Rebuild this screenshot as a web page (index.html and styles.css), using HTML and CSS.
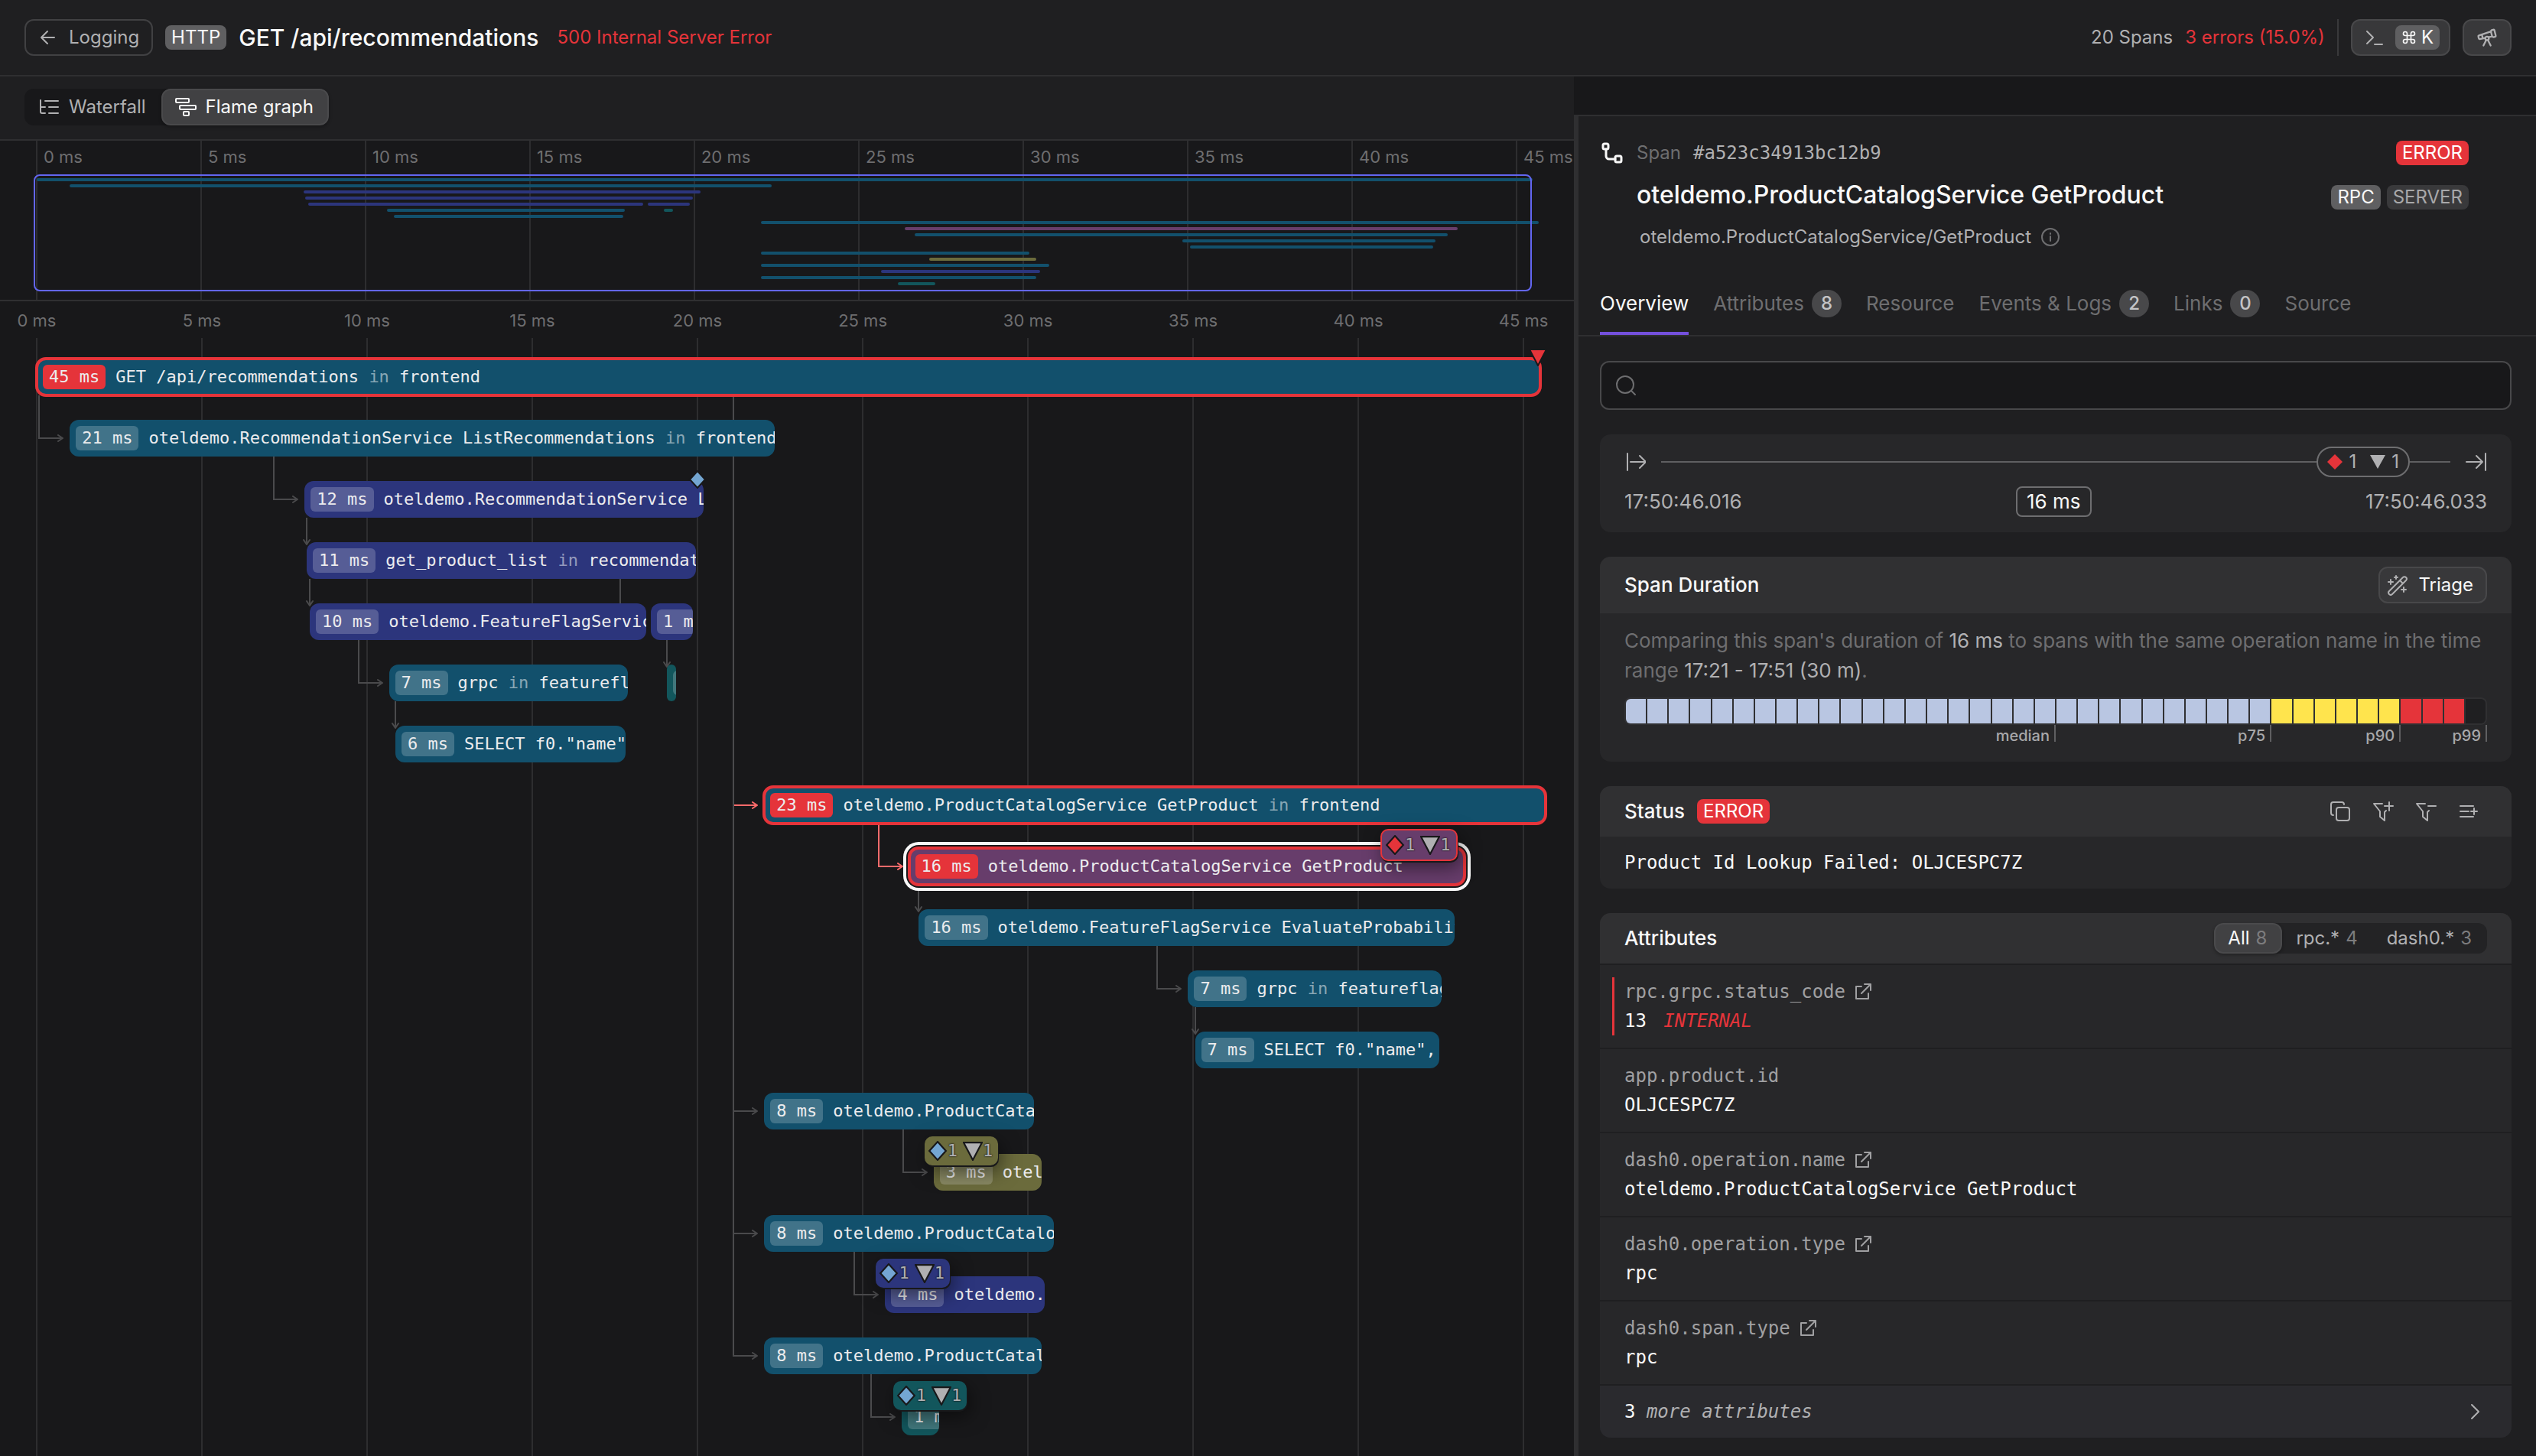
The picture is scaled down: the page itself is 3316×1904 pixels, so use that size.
FILE: index.html
```html
<!DOCTYPE html>
<html lang="en">
<head>
    <meta charset="UTF-8">
    <meta name="viewport" content="width=device-width, initial-scale=1.0">
    <title>GET /api/recommendations</title>
    <link rel="stylesheet" href="styles.css">
</head>

<body>
    <header class="topbar">
        <a class="btn btn-outline" href="#">
            <svg class="icon" width="24" height="24" viewBox="0 0 24 24"><path d="M21 12H4M12 4l-8 8 8 8"/></svg>
            Logging
        </a>
        <span class="badge badge-strong">HTTP</span>
        <h1>GET /api/recommendations</h1>
        <span class="error-text">500 Internal Server Error</span>
        <div class="topbar-right">
            <span>20 Spans</span>
            <span class="error-text">3 errors (15.0%)</span>
            <span class="divider"></span>
            <button class="btn" type="button" aria-label="Command menu">
                <svg class="icon" width="24" height="24" viewBox="0 0 24 24"><path d="M3 4l8 8-8 8M13 21h10"/></svg>
                <kbd class="badge badge-strong">
                    <svg class="icon" width="20" height="20" viewBox="0 0 24 24"><path d="M15 6v12a3 3 0 1 0 3-3H6a3 3 0 1 0 3 3V6a3 3 0 1 0-3 3h12a3 3 0 1 0-3-3"/></svg>
                    K
                </kbd>
            </button>
            <button class="btn btn-square" type="button" aria-label="Explore">
                <svg class="icon" width="28" height="28" viewBox="0 0 24 24"><path d="m10.065 12.493-6.18 1.318a.934.934 0 0 1-1.108-.702l-.537-2.15a1.07 1.07 0 0 1 .691-1.265l13.504-4.44M13.56 11.747l4.332-.924M16 21l-3.105-6.21M16.485 5.94a2 2 0 0 1 1.455-2.425l1.09-.272a1 1 0 0 1 1.212.727l1.515 6.06a1 1 0 0 1-.727 1.213l-1.09.272a2 2 0 0 1-2.425-1.455zM6.158 8.633l1.114 4.456M8 21l3.105-6.21"/><circle cx="12" cy="13" r="2"/></svg>
            </button>
        </div>
    </header>

    <main class="layout">
        <section class="trace">
            <div class="toolbar">
                <div class="segmented">
                    <button type="button">
                        <svg class="icon" width="28" height="24" viewBox="0 0 28 24"><path d="M3 3v15a2 2 0 0 0 2 2h4M3 12h6M9 4h17M14 12h12M14 20h12"/></svg>
                        Waterfall
                    </button>
                    <button class="active" type="button">
                        <svg class="icon" width="28" height="24" viewBox="0 0 28 24"><rect x="1" y="1" width="17" height="5" rx="1"/><rect x="6" y="10" width="21" height="5" rx="1"/><rect x="11" y="18" width="7" height="5" rx="1"/></svg>
                        Flame graph
                    </button>
                </div>
            </div>
            <div class="minimap">
                <div class="track" id="minimap"></div>
            </div>
            <div class="flame">
                <div class="track" id="flame"></div>
            </div>
        </section>

        <aside class="panel">
            <div class="panel-head">
                <div class="head-row">
                    <svg class="icon span-icon" width="28" height="28" viewBox="0 0 28 28"><rect x="2" y="2" width="7" height="7" rx="2"/><path d="M6 9v9a4 4 0 0 0 4 4h8"/><rect x="18" y="18" width="8" height="8" rx="2"/></svg>
                    <span class="dim">Span</span>
                    <span class="mono span-id">#a523c34913bc12b9</span>
                    <span class="badge badge-error">ERROR</span>
                </div>
                <div class="head-row title-row">
                    <h2>oteldemo.ProductCatalogService GetProduct</h2>
                    <span class="badge badge-strong">RPC</span>
                    <span class="badge">SERVER</span>
                </div>
                <div class="head-row subtitle">
                    oteldemo.ProductCatalogService/GetProduct
                    <svg class="icon dim" width="26" height="26" viewBox="0 0 26 26"><circle cx="13" cy="13" r="11"/><path d="M13 12v6M13 8v1"/></svg>
                </div>
            </div>
            <nav class="tabs">
                <a class="active" href="#">Overview</a>
                <a href="#">Attributes <span class="count">8</span></a>
                <a href="#">Resource</a>
                <a href="#">Events &amp; Logs <span class="count">2</span></a>
                <a href="#">Links <span class="count">0</span></a>
                <a href="#">Source</a>
            </nav>

            <div class="panel-body">
                <label class="search">
                    <svg class="icon" width="28" height="28" viewBox="0 0 28 28"><circle cx="13" cy="13" r="11"/><path d="M21 21l5 5"/></svg>
                    <input type="search" aria-label="Search">
                </label>

                <div class="card times">
                    <div class="range">
                        <svg class="icon" width="28" height="28" viewBox="0 0 28 28"><path d="M4 3v22M8 14h20M20 6l8 8-8 8"/></svg>
                        <span class="line"></span>
                        <span class="pill">
                            <svg width="20" height="20" viewBox="0 0 20 20"><path class="red" d="M10 0l10 10-10 10L0 10z"/></svg>1
                            <svg class="second" width="20" height="20" viewBox="0 0 20 20"><path d="M0 1h20L10 19z"/></svg>1
                        </span>
                        <span class="line line-end"></span>
                        <svg class="icon" width="28" height="28" viewBox="0 0 28 28"><path d="M26 3v22M1 14h21M14 6l8 8-8 8"/></svg>
                    </div>
                    <div class="stamps">
                        <span>17:50:46.016</span>
                        <span class="took">16 ms</span>
                        <span>17:50:46.033</span>
                    </div>
                </div>

                <div class="card">
                    <div class="card-head card-head-tall">
                        <h3>Span Duration</h3>
                        <button class="btn btn-light" type="button">
                            <svg class="icon" width="28" height="28" viewBox="0 0 28 28"><path d="M3 22L21 4a2 2 0 0 1 4 4L7 26a2 2 0 0 1-4-4zM17 8l4 4M5 7v6M2 10h6M12 2v4M10 4h4M22 17v6M19 20h6"/></svg>
                            Triage
                        </button>
                    </div>
                    <div class="duration">
                        <p>Comparing this span's duration of <b>16 ms</b> to spans with the same operation name in the time range <b>17:21 - 17:51 (30 m)</b>.</p>
                        <div class="histogram" id="histogram"></div>
                        <div class="percentiles">
                            <span>median</span>
                            <span>p75</span>
                            <span>p90</span>
                            <span>p99</span>
                        </div>
                    </div>
                </div>

                <div class="card">
                    <div class="card-head">
                        <h3>Status</h3>
                        <span class="badge badge-error">ERROR</span>
                        <div class="actions">
                            <button type="button" aria-label="Copy"><svg class="icon" width="28" height="28" viewBox="0 0 28 28"><rect x="9" y="9" width="17" height="17" rx="3"/><path d="M5 19a3 3 0 0 1-3-3V5a3 3 0 0 1 3-3h11a3 3 0 0 1 3 3"/></svg></button>
                            <button type="button" aria-label="Add filter"><svg class="icon" width="28" height="28" viewBox="0 0 28 28"><path d="M13 4H2l8 10v7l6 5V15l2-2M22 2v11M16 7h11"/></svg></button>
                            <button type="button" aria-label="Exclude"><svg class="icon" width="28" height="28" viewBox="0 0 28 28"><path d="M13 4H2l8 10v7l6 5V15l2-2M17 7h10"/></svg></button>
                            <button type="button" aria-label="Add column"><svg class="icon" width="28" height="28" viewBox="0 0 28 28"><path d="M3 7h17M3 14h11M3 21h17M21 10v8M17 14h8"/></svg></button>
                        </div>
                    </div>
                    <div class="message mono">Product Id Lookup Failed: OLJCESPC7Z</div>
                </div>

                <div class="card">
                    <div class="card-head">
                        <h3>Attributes</h3>
                        <div class="segmented segmented-small">
                            <button class="active" type="button">All <i>8</i></button>
                            <button type="button">rpc.* <i>4</i></button>
                            <button type="button">dash0.* <i>3</i></button>
                        </div>
                    </div>
                    <dl class="attributes mono">
                        <div class="flagged">
                            <dt>rpc.grpc.status_code <a href="#" aria-label="Open"><svg class="icon" width="22" height="22" viewBox="0 0 22 22"><path d="M9 4H2v16h16v-7M13 1h8v8M21 1L9 13"/></svg></a></dt>
                            <dd>13 <em>INTERNAL</em></dd>
                        </div>
                        <div>
                            <dt>app.product.id</dt>
                            <dd>OLJCESPC7Z</dd>
                        </div>
                        <div>
                            <dt>dash0.operation.name <a href="#" aria-label="Open"><svg class="icon" width="22" height="22" viewBox="0 0 22 22"><path d="M9 4H2v16h16v-7M13 1h8v8M21 1L9 13"/></svg></a></dt>
                            <dd>oteldemo.ProductCatalogService GetProduct</dd>
                        </div>
                        <div>
                            <dt>dash0.operation.type <a href="#" aria-label="Open"><svg class="icon" width="22" height="22" viewBox="0 0 22 22"><path d="M9 4H2v16h16v-7M13 1h8v8M21 1L9 13"/></svg></a></dt>
                            <dd>rpc</dd>
                        </div>
                        <div>
                            <dt>dash0.span.type <a href="#" aria-label="Open"><svg class="icon" width="22" height="22" viewBox="0 0 22 22"><path d="M9 4H2v16h16v-7M13 1h8v8M21 1L9 13"/></svg></a></dt>
                            <dd>rpc</dd>
                        </div>
                    </dl>
                    <button class="more mono" type="button">
                        <span>3 <em>more attributes</em></span>
                        <svg class="icon" width="28" height="28" viewBox="0 0 28 28"><path d="M8 5l9 9-9 9"/></svg>
                    </button>
                </div>
            </div>
        </aside>
    </main>

    <script src="script.js"></script>
</body>

</html>
```
FILE: styles.css
```css
* {
    box-sizing: border-box;
}

body {
    margin: 0;
    min-height: 100vh;
    display: flex;
    flex-direction: column;
    background-color: #18181a;
    color: #b0b0b2;
    font-family: Inter, "Liberation Sans", sans-serif;
    font-size: 24px;
    line-height: 32px;
}

h1, h2, h3, p, dl, dd {
    margin: 0;
}

h1, h2, h3 {
    color: #f8f8f8;
    font-weight: 500;
}

button, input, kbd {
    font: inherit;
    color: inherit;
}

button {
    cursor: pointer;
}

a {
    color: inherit;
    text-decoration: none;
}

.mono {
    font-family: "DejaVu Sans Mono", "Liberation Mono", monospace;
}

.dim {
    color: #6e6e70;
}

.error-text {
    color: #e5343a;
}

.icon {
    flex: none;
    fill: none;
    stroke: currentColor;
    stroke-width: 2px;
    stroke-linecap: round;
    stroke-linejoin: round;
}

/* top bar */
.topbar {
    display: flex;
    align-items: center;
    gap: 16px;
    height: 100px;
    padding: 0 32px;
    background-color: #1f1f21;
    border-bottom: 2px solid #2f2f31;
}

.topbar h1 {
    font-size: 30px;
}

.topbar .error-text {
    margin-left: 8px;
}

.topbar-right {
    margin-left: auto;
    display: flex;
    align-items: center;
    gap: 16px;
}

.topbar-right .error-text {
    margin-left: 0;
}

.divider {
    width: 2px;
    height: 48px;
    background-color: #39393b;
}

.btn {
    display: flex;
    align-items: center;
    gap: 16px;
    height: 48px;
    padding: 0 16px;
    border: 2px solid #48484a;
    border-radius: 12px;
    background-color: #38383a;
}

.topbar-right .btn {
    padding: 0 12px 0 16px;
}

.topbar-right .btn-square {
    padding: 0 16px;
}

.btn-outline {
    background: none;
    border-color: #414143;
}

.badge {
    display: inline-flex;
    align-items: center;
    gap: 6px;
    height: 32px;
    padding: 0 8px;
    border-radius: 8px;
    background-color: #39393b;
    color: #a8a8aa;
}

.badge-strong {
    background-color: #5f5f61;
    color: #f8f8f8;
}

.badge-error {
    background-color: #e5343a;
    color: #fff;
}

/* two columns */
.layout {
    flex: 1;
    display: grid;
    grid-template-columns: 1029fr 629fr;
}

.trace {
    min-width: 0;
    display: flex;
    flex-direction: column;
    overflow: hidden;
}

.toolbar {
    padding: 16px 32px 18px;
    background-color: #1f1f21;
    border-bottom: 2px solid #2f2f31;
}

.segmented {
    display: inline-flex;
    vertical-align: top;
    border-radius: 12px;
    background-color: #18181a;
}

.segmented button {
    display: flex;
    align-items: center;
    gap: 12px;
    height: 48px;
    padding: 0 18px 0 16px;
    border: 2px solid transparent;
    border-radius: 12px;
    background: none;
}

.segmented .active {
    background-color: #414143;
    border-color: #4a4a4c;
    color: #f8f8f8;
    box-shadow: 0 2px 4px rgba(0, 0, 0, 0.3);
}

.segmented-small {
    margin-left: auto;
    background-color: #232325;
}

.segmented-small button {
    gap: 8px;
    height: 40px;
}

.segmented-small i {
    font-style: normal;
    color: #7c7c7e;
}

/* minimap, 45 ms wide */
.minimap {
    height: 210px;
    padding: 0 75px 0 48px;
    border-bottom: 2px solid #2f2f31;
}

.track {
    position: relative;
    height: 100%;
    font-size: 22px;
}

.tick {
    position: absolute;
    top: 0;
    bottom: 0;
    width: 2px;
    margin-left: -1px;
    background-color: #2d2d2f;
}

.tick-label {
    position: absolute;
    top: 5px;
    margin-left: 9px;
    color: #6e6e70;
    white-space: nowrap;
}

.mini-bar {
    position: absolute;
    height: 4px;
    border-radius: 2px;
}

.window {
    position: absolute;
    top: 44px;
    left: -4px;
    right: -20px;
    height: 153px;
    border: 2px solid #6366f1;
    border-radius: 8px;
}

/* flame graph, rows are 80px apart */
.flame {
    flex: 1;
    padding: 0 66px 0 48px;
}

.flame .track {
    min-height: 1508px;
}

.flame .tick {
    top: 48px;
}

.flame .tick-label {
    top: 9px;
    margin-left: 0;
    transform: translateX(-50%);
}

.bar {
    position: absolute;
    height: 48px;
    display: flex;
    align-items: center;
    gap: 13px;
    padding-left: 8px;
    border-radius: 12px;
    overflow: hidden;
    white-space: pre;
    color: #ececee;
    font-family: "DejaVu Sans Mono", "Liberation Mono", monospace;
}

.bar i {
    font-style: normal;
    color: rgba(255, 255, 255, 0.5);
}

.bar .took {
    flex: none;
    padding: 0 8px;
    border-radius: 6px;
    background-color: rgba(255, 255, 255, 0.2);
}

.cyan { background-color: #12506c; }
.blue { background-color: #2c357c; }
.teal { background-color: #12565c; }
.olive { background-color: #6b6b3c; }
.plum { background-color: #673d6b; }

.bar.error {
    outline: 4px solid #e5343a;
    outline-offset: -2px;
}

.bar.error .took {
    background-color: #e5343a;
}

.bar.selected {
    box-shadow: 0 0 0 4px #18181a, 0 0 0 8px #f8f8f8;
}

.link {
    position: absolute;
    width: 32px;
    margin-left: -41px;
    border: 0 solid #4a4a4c;
    border-width: 0 0 2px 2px;
    color: #4a4a4c;
}

.link svg {
    position: absolute;
    right: -1px;
    bottom: -6px;
}

.link-down {
    width: 2px;
    margin-left: -1px;
    border-width: 0 0 0 2px;
}

.link-down svg {
    right: -4px;
    bottom: -2px;
    transform: rotate(90deg);
}

.link-error {
    border-color: #ff6b6b;
    color: #ff6b6b;
}

.marker {
    position: absolute;
    display: flex;
    transform: translateX(-50%);
}

.event {
    position: absolute;
    display: flex;
    align-items: center;
    height: 38px;
    margin-left: -12px;
    padding: 0 7px 0 4px;
    border-radius: 10px;
    color: #b0b0b2;
    font-family: "DejaVu Sans Mono", "Liberation Mono", monospace;
    text-shadow: 0 0 2px #18181a, 0 0 2px #18181a;
    box-shadow: 1px 2px 0 #18181a, 4px 8px 24px rgba(0, 0, 0, 0.5);
}

.event.error {
    border: 2px solid #e5343a;
    height: 42px;
}

.event svg + span + svg {
    margin-left: 7px;
}

.shape {
    stroke: #18181a;
    stroke-width: 2px;
}

.shape-info { fill: #74a6d2; }
.shape-error { fill: #e5343a; }
.shape-log { fill: #b0b0b2; }

/* side panel */
.panel {
    min-width: 0;
    margin-top: 50px;
    border-top: 2px solid #2f2f31;
    border-left: 6px solid #2f2f31;
    background-color: #1f1f21;
}

.panel-head {
    padding: 32px 88px 0 28px;
}

.head-row {
    display: flex;
    align-items: center;
    gap: 8px;
}

.title-row {
    align-items: baseline;
}

.title-row h2 {
    margin: 0 auto 0 48px;
    font-size: 32px;
    line-height: 78px;
}

.span-icon {
    margin: 0 10px 0 2px;
    color: #f8f8f8;
    stroke-width: 3px;
}

.span-id {
    margin: 0 auto 0 8px;
}

.subtitle {
    padding-left: 52px;
    gap: 12px;
}

.tabs {
    display: flex;
    gap: 32px;
    height: 114px;
    padding: 34px 28px 0;
    border-bottom: 2px solid #2f2f31;
    font-size: 26px;
    color: #6e6e70;
}

.tabs a {
    display: flex;
    align-items: center;
    gap: 10px;
    border-bottom: 4px solid transparent;
}

.tabs .active {
    color: #f8f8f8;
    border-color: #7450dc;
}

.count {
    min-width: 39px;
    padding: 2px 0;
    border-radius: 20px;
    background-color: #48484a;
    color: #c4c4c6;
    font-size: 24px;
    font-weight: 500;
    text-align: center;
}

.panel-body {
    display: flex;
    flex-direction: column;
    gap: 32px;
    padding: 32px 32px 24px 28px;
}

.search {
    display: flex;
    align-items: center;
    gap: 12px;
    height: 64px;
    padding: 0 18px;
    border: 2px solid #48484a;
    border-radius: 12px;
    background-color: #18181a;
    color: #6e6e70;
}

.search input {
    flex: 1;
    min-width: 0;
    padding: 0;
    border: 0;
    outline: none;
    background: none;
}

.card {
    border-radius: 14px;
    overflow: hidden;
    background-color: #272729;
}

.card h3 {
    font-size: 26px;
}

.card-head {
    display: flex;
    align-items: center;
    gap: 16px;
    height: 66px;
    padding: 0 32px;
    background-color: #303032;
}

.card-head-tall {
    height: 74px;
}

.card-head .btn {
    gap: 13px;
    margin-left: auto;
    padding: 0 16px 0 9px;
    color: #f8f8f8;
}

.card-head .btn .icon {
    color: #b0b0b2;
}

.times {
    display: flex;
    flex-direction: column;
    gap: 12px;
    padding: 16px 32px 20px;
    font-size: 26px;
}

.range, .stamps {
    display: flex;
    align-items: center;
    height: 40px;
}

.stamps {
    justify-content: space-between;
}

.line {
    flex: 1;
    height: 2px;
    margin-left: 20px;
    background-color: #5f5f61;
}

.line-end {
    flex: none;
    width: 53px;
    margin: 0 20px 0 0;
}

.pill {
    display: flex;
    align-items: center;
    gap: 8px;
    height: 40px;
    padding: 0 12px;
    border: 2px solid #6e6e70;
    border-radius: 20px;
    font-size: 24px;
}

.pill svg {
    fill: #b0b0b2;
}

.pill .red {
    fill: #e5343a;
}

.pill .second {
    margin-left: 10px;
}

.stamps .took {
    padding: 2px 12px;
    border: 2px solid #6e6e70;
    border-radius: 8px;
    color: #f8f8f8;
}

.duration {
    padding: 16px 32px 20px;
    font-size: 26px;
    line-height: 39px;
    color: #6e6e70;
}

.duration b {
    color: #b0b0b2;
    font-weight: 400;
}

.histogram {
    display: grid;
    grid-template-columns: repeat(40, 1fr);
    gap: 2px;
    height: 36px;
    margin-top: 16px;
    border: 2px solid #303032;
    border-radius: 8px;
    overflow: hidden;
    background-color: #303032;
}

.low { background-color: #b9c6e2; }
.mid { background-color: #ffe44d; }
.high { background-color: #e5343a; }
.empty { background-color: #1f1f21; }

/* widths follow the 50 / 75 / 90 / 99 marks */
.percentiles {
    display: grid;
    grid-template-columns: 20fr 10fr 6fr 4fr;
    color: #a8a8aa;
    font-size: 20px;
    font-weight: 500;
    line-height: 28px;
}

.percentiles span {
    padding-right: 8px;
    text-align: right;
    background: linear-gradient(#5f5f61, #5f5f61) top right / 2px 22px no-repeat;
}

.actions {
    display: flex;
    gap: 28px;
    margin: 0 10px 0 auto;
}

.actions button {
    display: flex;
    padding: 0;
    border: 0;
    background: none;
}

.message {
    padding: 18px 32px;
    color: #f8f8f8;
}

.attributes > div {
    padding: 16px 32px;
    border-top: 2px solid #1f1f21;
    line-height: 38px;
}

.attributes .flagged {
    background: linear-gradient(#e5343a, #e5343a) 16px 16px / 3px 76px no-repeat;
}

.attributes dt {
    display: flex;
    align-items: center;
    gap: 12px;
    color: #a0a0a2;
}

.attributes dt a {
    display: flex;
}

.attributes dd {
    color: #f8f8f8;
}

.attributes em {
    margin-left: 8px;
    color: #e5343a;
}

.more {
    display: flex;
    align-items: center;
    justify-content: space-between;
    width: 100%;
    height: 70px;
    padding: 0 32px;
    border: 0;
    border-top: 2px solid #1f1f21;
    background-color: #2a2a2e;
    color: #f8f8f8;
}

.more em, .more .icon {
    color: #b0b0b2;
}
```
FILE: script.js
```js
const TOTAL = 45;

// start and dur in ms
const spans = [
    { row: 0, start: 0, dur: 45.5, color: 'cyan', took: '45 ms', name: 'GET /api/recommendations', service: 'frontend', error: true },
    { row: 1, parent: 0, start: 1, dur: 21.35, color: 'cyan', took: '21 ms', name: 'oteldemo.RecommendationService ListRecommendations', service: 'frontend' },
    { row: 2, parent: 1, start: 8.11, dur: 12.08, color: 'blue', took: '12 ms', name: 'oteldemo.RecommendationService L' },
    { row: 3, parent: 2, start: 8.17, dur: 11.78, color: 'blue', took: '11 ms', name: 'get_product_list', service: 'recommendat' },
    { row: 4, parent: 3, start: 8.26, dur: 10.19, color: 'blue', took: '10 ms', name: 'oteldemo.FeatureFlagServic' },
    { row: 4, parent: 3, start: 18.59, dur: 1.28, color: 'blue', took: '1 ms', name: '' },
    { row: 5, parent: 4, start: 10.66, dur: 7.23, color: 'cyan', took: '7 ms', name: 'grpc', service: 'featurefl' },
    { row: 5, parent: 5, start: 19.08, dur: 0.28, color: 'teal', took: '', name: '' },
    { row: 6, parent: 6, start: 10.86, dur: 6.97, color: 'cyan', took: '6 ms', name: 'SELECT f0."name"' },
    { row: 7, parent: 0, start: 22.02, dur: 23.65, color: 'cyan', took: '23 ms', name: 'oteldemo.ProductCatalogService GetProduct', service: 'frontend', error: true },
    { row: 8, parent: 9, start: 26.4, dur: 16.81, color: 'plum', took: '16 ms', name: 'oteldemo.ProductCatalogService GetProduct', error: true, selected: true },
    { row: 9, parent: 10, start: 26.7, dur: 16.22, color: 'cyan', took: '16 ms', name: 'oteldemo.FeatureFlagService EvaluateProbabilit' },
    { row: 10, parent: 11, start: 34.85, dur: 7.68, color: 'cyan', took: '7 ms', name: 'grpc', service: 'featureflag' },
    { row: 11, parent: 12, start: 35.06, dur: 7.4, color: 'cyan', took: '7 ms', name: 'SELECT f0."name",' },
    { row: 12, parent: 0, start: 22.02, dur: 8.17, color: 'cyan', took: '8 ms', name: 'oteldemo.ProductCata' },
    { row: 13, parent: 14, start: 27.15, dur: 3.26, color: 'olive', took: '3 ms', name: 'otel' },
    { row: 14, parent: 0, start: 22.02, dur: 8.78, color: 'cyan', took: '8 ms', name: 'oteldemo.ProductCatalo' },
    { row: 15, parent: 16, start: 25.68, dur: 4.83, color: 'blue', took: '4 ms', name: 'oteldemo.' },
    { row: 16, parent: 0, start: 22.02, dur: 8.39, color: 'cyan', took: '8 ms', name: 'oteldemo.ProductCatal' },
    { row: 17, parent: 18, start: 26.18, dur: 1.14, color: 'teal', took: '1 ms', name: '' }
];

const events = [
    { row: 8, at: 40.95, color: 'plum', kind: 'error' },
    { row: 13, at: 27.15, color: 'olive', kind: 'info' },
    { row: 15, at: 25.68, color: 'blue', kind: 'info' },
    { row: 17, at: 26.2, color: 'teal', kind: 'info' }
];

const minimap = document.getElementById('minimap');
const flame = document.getElementById('flame');
const histogram = document.getElementById('histogram');

const diamond = (kind, size) =>
    `<svg width="${size}" height="${size}" viewBox="0 0 24 24"><path class="shape shape-${kind}" d="M12 1l10 11-10 11L2 12z"/></svg>`;
const triangle = (kind, size) =>
    `<svg width="${size}" height="${size}" viewBox="0 0 24 24"><path class="shape shape-${kind}" d="M1 2h22L12 23z"/></svg>`;
const arrow = '<svg class="icon" width="10" height="10" viewBox="0 0 10 10"><path d="M3 1l6 4-6 4"/></svg>';

function add(parent, className, style, html = '') {
    const el = document.createElement('div');
    el.className = className;
    for (const key in style) {
        el.style[key] = style[key];
    }
    el.innerHTML = html;
    parent.appendChild(el);
}

const pct = (ms) => (ms / TOTAL * 100).toFixed(2) + '%';
const rowTop = (row) => 75 + row * 80;

for (let ms = 0; ms <= TOTAL; ms += 5) {
    [minimap, flame].forEach((track) => {
        add(track, 'tick', { left: pct(ms) });
        add(track, 'tick-label', { left: pct(ms) }, ms + ' ms');
    });
}

spans.forEach((s) => {
    add(minimap, 'mini-bar ' + s.color, { left: pct(s.start), width: pct(s.dur), top: 49 + s.row * 8 + 'px' });
});
add(minimap, 'window', {});

// links go first so that the bars cover them
spans.forEach((s) => {
    if (s.parent === undefined) return;
    const parent = spans[s.parent];
    const top = rowTop(parent.row) + 48;
    const down = s.start - parent.start < 0.95;
    const end = down ? rowTop(s.row) + 2 : rowTop(s.row) + 25;
    let cls = 'link';
    if (down) cls += ' link-down';
    if (s.error) cls += ' link-error';
    add(flame, cls, { left: pct(s.start), top: top + 'px', height: end - top + 'px' }, arrow);
});

spans.forEach((s) => {
    let cls = 'bar ' + s.color;
    if (s.error) cls += ' error';
    if (s.selected) cls += ' selected';
    const service = s.service ? ` <i>in</i> ${s.service}` : '';
    add(flame, cls, { left: pct(s.start), width: pct(s.dur), top: rowTop(s.row) + 'px' },
        `<span class="took">${s.took || '&nbsp;'}</span><span>${s.name}${service}</span>`);
});

add(flame, 'marker', { left: pct(45.45), top: rowTop(0) - 14 + 'px' }, triangle('error', 24));
add(flame, 'marker', { left: pct(20), top: rowTop(2) - 14 + 'px' }, diamond('info', 24));

events.forEach((e) => {
    const top = rowTop(e.row) - (e.kind === 'error' ? 25 : 23);
    add(flame, `event ${e.color} ${e.kind}`, { left: pct(e.at), top: top + 'px' },
        `${diamond(e.kind, 26)}<span>1</span>${triangle('log', 26)}<span>1</span>`);
});

for (let i = 0; i < 40; i++) {
    add(histogram, i < 30 ? 'low' : i < 36 ? 'mid' : i < 39 ? 'high' : 'empty', {});
}
```
